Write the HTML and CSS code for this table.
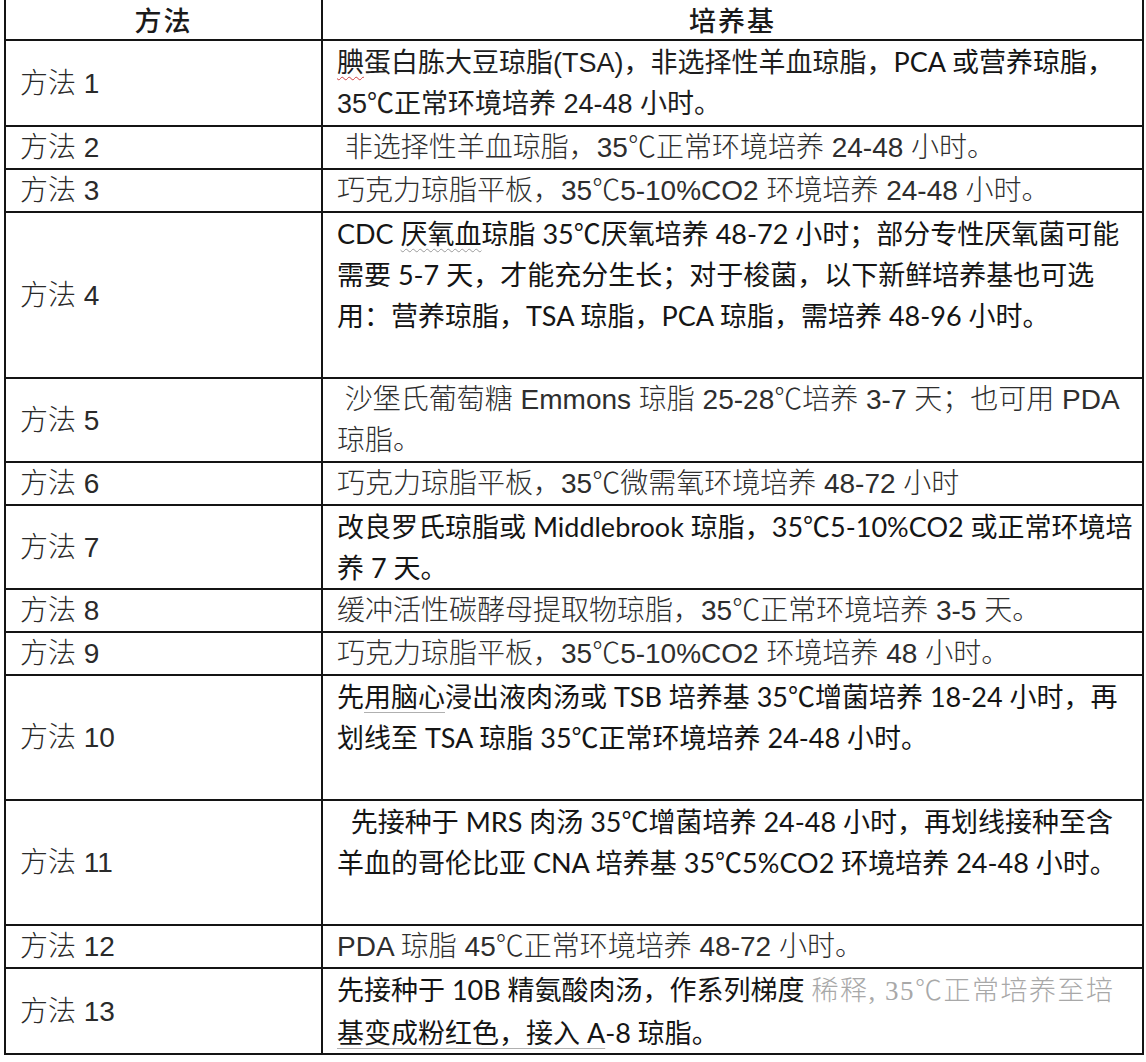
FILE: index.html
```html
<!DOCTYPE html>
<html lang="zh-CN">
<head>
<meta charset="utf-8">
<title>培养基</title>
<link rel="stylesheet" href="styles.css">
</head>
<body>
<table class="media-table">
  <colgroup><col class="col-method"><col class="col-media"></colgroup>
  <thead>
    <tr><th>方法</th><th>培养基</th></tr>
  </thead>
  <tbody>
    <tr>
      <td class="method">方法 1</td>
      <td class="media"><span class="narrow"><span class="spell">腆</span>蛋白胨大豆琼脂(TSA)，非选择性羊血琼脂，</span><span class="cal">PCA 或营养琼脂，</span><br><span class="narrow">35℃正常环境培养 24-48 小时。</span></td>
    </tr>
    <tr>
      <td class="method">方法 2</td>
      <td class="media thin">&nbsp;非选择性羊血琼脂，35℃正常环境培养 24-48 小时。</td>
    </tr>
    <tr>
      <td class="method">方法 3</td>
      <td class="media thin">巧克力琼脂平板，35℃5-10%CO2 环境培养 24-48 小时。</td>
    </tr>
    <tr>
      <td class="method">方法 4</td>
      <td class="media cal">CDC <span class="grammar">厌氧血</span>琼脂 35℃厌氧培养 48-72 小时；部分专性厌氧菌可能<br>需要 5-7 天，才能充分生长；对于梭菌，以下新鲜培养基也可选<br>用：营养琼脂，TSA 琼脂，PCA 琼脂，需培养 48-96 小时。<br>&nbsp;</td>
    </tr>
    <tr>
      <td class="method">方法 5</td>
      <td class="media thin">&nbsp;沙堡氏葡萄糖 Emmons 琼脂 25-28℃培养 3-7 天；也可用 PDA<br>琼脂。</td>
    </tr>
    <tr>
      <td class="method">方法 6</td>
      <td class="media thin">巧克力琼脂平板，35℃微需氧环境培养 48-72 小时</td>
    </tr>
    <tr>
      <td class="method">方法 7</td>
      <td class="media cal">改良罗氏琼脂或 Middlebrook 琼脂，35℃5-10%CO2 或正常环境培<br>养 7 天。</td>
    </tr>
    <tr>
      <td class="method">方法 8</td>
      <td class="media thin">缓冲活性碳酵母提取物琼脂，35℃正常环境培养 3-5 天。</td>
    </tr>
    <tr>
      <td class="method">方法 9</td>
      <td class="media thin mark-cell">巧克力琼脂平板，35℃5-10%CO2 环境培养 48 小时。<span class="edge-mark"></span></td>
    </tr>
    <tr>
      <td class="method">方法 10</td>
      <td class="media cal">先<span class="underline">用脑心</span>浸出液肉汤或 TSB 培养基 35℃增菌培养 18-24 小时，再<br>划线至 TSA 琼脂 35℃正常环境培养 24-48 小时。<br>&nbsp;</td>
    </tr>
    <tr>
      <td class="method">方法 11</td>
      <td class="media cal">&nbsp;&nbsp;先接种于 MRS 肉汤 35℃增菌培养 24-48 小时，再划线接种至含<br>羊血的哥伦比亚 CNA 培养基 35℃5%CO2 环境培养 24-48 小时。<br>&nbsp;</td>
    </tr>
    <tr>
      <td class="method">方法 12</td>
      <td class="media thin">PDA 琼脂 45℃正常环境培养 48-72 小时。</td>
    </tr>
    <tr>
      <td class="method">方法 13</td>
      <td class="media cal">先接种于 10B 精氨酸肉汤，作系列梯度 <span class="faded">稀释, 35℃正常培养至培</span><br><span class="underline">基变成粉红色，接入 A</span>-8 琼脂。</td>
    </tr>
  </tbody>
</table>
</body>
</html>
```

FILE: styles.css
```css
html, body {
  margin: 0;
  padding: 0;
  background: #ffffff;
}

body {
  font-family: "Liberation Sans", "Noto Sans CJK SC", sans-serif;
  color: #222;
}

.media-table {
  border-collapse: collapse;
  width: 1138px;
  margin: 0 0 0 4px;
  table-layout: fixed;
}

.col-method { width: 317px; }
.col-media { width: 821px; }

.media-table th,
.media-table td {
  border: 2px solid #141414;
  padding: 0;
  font-size: 27px;
  line-height: 41px;
  white-space: nowrap;
  overflow: hidden;
}

.media-table th {
  border-top: none;
  overflow: visible;
  font-family: "Noto Sans CJK SC", sans-serif;
  font-weight: 500;
  text-align: center;
  color: #1a1a1a;
  font-size: 27px;
  letter-spacing: 2px;
  line-height: 39px;
  height: 38px;
}

.method {
  vertical-align: middle;
  padding-left: 14px !important;
  font-family: "Liberation Sans", "Noto Sans CJK SC", sans-serif;
  font-weight: 300;
  font-size: 28px !important;
  color: #2a2a2a;
}

.media {
  vertical-align: top;
  padding-left: 14px !important;
  color: #1e1e1e;
}

.thin {
  font-family: "Liberation Sans", "Noto Sans CJK SC", sans-serif;
  font-weight: 300;
  font-size: 28px !important;
  color: #2e2e2e;
}

.cal {
  font-family: "Lato", "Noto Sans CJK SC", sans-serif;
  font-weight: 400;
  color: #151515;
}

.narrow {
  font-family: "Liberation Sans", "Noto Sans CJK SC", sans-serif;
  font-weight: 400;
  color: #1e1e1e;
}

.spell {
  text-decoration: underline wavy #d04040;
  text-decoration-thickness: 1px;
  text-underline-offset: 4px;
}

.grammar {
  text-decoration: underline wavy #9a9a9a;
  text-decoration-thickness: 1px;
  text-underline-offset: 4px;
}

.underline {
  text-decoration: underline #b0b0b0;
  text-decoration-thickness: 1px;
  text-underline-offset: 5px;
}

.faded {
  font-family: "Liberation Serif", "Noto Sans CJK SC", serif;
  font-weight: 300;
  color: #a8a8a8;
  font-size: 27px;
  letter-spacing: 1.5px;
}

.mark-cell {
  position: relative;
  overflow: visible !important;
}

.edge-mark {
  position: absolute;
  right: -6px;
  top: 2px;
  width: 2px;
  height: 33px;
  background: #222;
}
```
